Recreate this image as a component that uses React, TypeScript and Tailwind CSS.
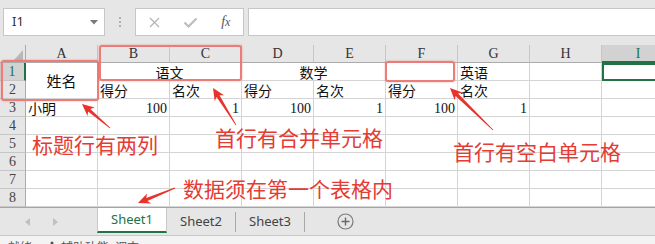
import React from "react";

const CJK = "[font-family:'Noto_Sans_CJK_SC',sans-serif]";
const SERIF = "[font-family:'Liberation_Serif',serif]";
const SANS = "[font-family:'Noto_Sans','Noto_Sans_CJK_SC',sans-serif]";

const COLS = ["A", "B", "C", "D", "E", "F", "G", "H"];

function arrowPoints(x1: number, y1: number, x2: number, y2: number) {
  const dx = x2 - x1;
  const dy = y2 - y1;
  const L = Math.hypot(dx, dy);
  const ux = dx / L;
  const uy = dy / L;
  const nx = -uy;
  const ny = ux;
  const hl = 12;
  const hw = 5.5;
  const sw = 1.7;
  const tw = 0.4;
  const bx = x2 - ux * hl;
  const by = y2 - uy * hl;
  const pts = [
    [x1 + nx * tw, y1 + ny * tw],
    [bx + ux * 2.5 + nx * sw, by + uy * 2.5 + ny * sw],
    [bx + nx * hw, by + ny * hw],
    [x2, y2],
    [bx - nx * hw, by - ny * hw],
    [bx + ux * 2.5 - nx * sw, by + uy * 2.5 - ny * sw],
    [x1 - nx * tw, y1 - ny * tw],
  ];
  return pts.map((p) => p.map((v) => v.toFixed(1)).join(",")).join(" ");
}

const cell = "bg-white border-r border-b border-[#d4d4d4] flex items-end px-[2px] overflow-visible whitespace-nowrap";
const cjkText = `${CJK} text-[14px] leading-[16px] text-[#111]`;
const numText = `${SERIF} text-[14px] leading-[15px] text-[#111]`;

function RowHead({ n, active }: { n: number; active?: boolean }) {
  return (
    <div
      className={
        active
          ? `bg-[#d2d2d2] border-r-2 border-r-[#217346] border-b border-b-[#c6c6c6] flex items-end justify-center ${SERIF} text-[14px] leading-[16px] text-[#217346]`
          : `bg-[#e6e6e6] border-r border-r-[#ababab] border-b border-b-[#c6c6c6] flex items-end justify-center ${SERIF} text-[14px] leading-[16px] text-[#444]`
      }
    >
      {n}
    </div>
  );
}

function Empty() {
  return <div className={cell} />;
}

export default function App() {
  const arrows: [number, number, number, number][] = [
    [110, 128, 82, 104],
    [236, 125, 213, 88],
    [493, 130, 450, 88],
    [175, 188, 138, 203],
  ];

  return (
    <div className="relative w-[655px] h-[244px] overflow-hidden bg-[#e6e6e6]">
      {/* formula bar */}
      <div className="flex items-start h-[45px] pt-[8px]">
        <div className="ml-[3px] w-[102px] h-[28px] border border-[#c6c6c6] bg-white flex items-center justify-between pl-[8px] pr-[6px]">
          <span className={`${SANS} text-[13px] text-[#333]`}>I1</span>
          <svg width="8" height="5" viewBox="0 0 8 5">
            <polygon points="0,0 8,0 4,4.5" fill="#7a7a7a" />
          </svg>
        </div>
        <div className="w-[30px] h-[28px] flex flex-col items-center justify-center gap-[2px]">
          <div className="w-[2px] h-[2px] bg-[#b0b0b0]" />
          <div className="w-[2px] h-[2px] bg-[#b0b0b0]" />
          <div className="w-[2px] h-[2px] bg-[#b0b0b0]" />
        </div>
        <div className="w-[109px] h-[28px] border border-[#c6c6c6] bg-white flex items-center">
          <div className="w-[37px] flex justify-center">
            <svg width="11" height="11" viewBox="0 0 11 11">
              <path d="M1 1 L10 10 M10 1 L1 10" stroke="#b4b4b4" strokeWidth="1.3" />
            </svg>
          </div>
          <div className="w-[37px] flex justify-center">
            <svg width="15" height="11" viewBox="0 0 15 11">
              <path d="M1.5 5.5 L5.5 9.5 L13.5 1.5" stroke="#bdbdbd" strokeWidth="2.2" fill="none" />
            </svg>
          </div>
          <div className="w-[35px] flex justify-center">
            <span className="[font-family:'Liberation_Serif',serif] italic text-[14px] text-[#555] leading-none">
              f<span className="text-[12px]">x</span>
            </span>
          </div>
        </div>
        <div className="ml-[4px] flex-1 -mr-[2px] h-[28px] border border-[#c6c6c6] bg-white" />
      </div>

      {/* grid */}
      <div className="grid grid-cols-[26px_repeat(9,72px)] auto-rows-[18px]">
        <div className="bg-[#e6e6e6] border-r border-r-[#ababab] border-b border-b-[#ababab] relative">
          <svg className="absolute left-[13px] top-[5px]" width="10" height="11" viewBox="0 0 10 11">
            <polygon points="10,0 10,11 0,11" fill="#b8b8b8" />
          </svg>
        </div>
        {COLS.map((c) => (
          <div
            key={c}
            className={`bg-[#e6e6e6] border-r border-r-[#c6c6c6] border-b border-b-[#ababab] flex items-end justify-center ${SERIF} text-[14px] leading-[16px] text-[#333]`}
          >
            {c}
          </div>
        ))}
        <div className={`bg-[#d2d2d2] border-b-2 border-b-[#217346] flex items-end justify-center ${SERIF} text-[14px] leading-[15px] text-[#217346]`}>
          I
        </div>

        {/* row 1 */}
        <RowHead n={1} active />
        <div className={`${cell} row-span-2 !items-center justify-center`}>
          <span className={`${CJK} text-[15px] leading-[18px] text-[#111]`}>姓名</span>
        </div>
        <div className={`${cell} col-span-2 justify-center`}>
          <span className={cjkText}>语文</span>
        </div>
        <div className={`${cell} col-span-2 justify-center`}>
          <span className={cjkText}>数学</span>
        </div>
        <Empty />
        <div className={cell}>
          <span className={cjkText}>英语</span>
        </div>
        <Empty />
        <div className="bg-white border-2 border-[#217346]" />

        {/* row 2 */}
        <RowHead n={2} />
        <div className={cell}><span className={cjkText}>得分</span></div>
        <div className={cell}><span className={cjkText}>名次</span></div>
        <div className={cell}><span className={cjkText}>得分</span></div>
        <div className={cell}><span className={cjkText}>名次</span></div>
        <div className={cell}><span className={cjkText}>得分</span></div>
        <div className={cell}><span className={cjkText}>名次</span></div>
        <Empty />
        <Empty />

        {/* row 3 */}
        <RowHead n={3} />
        <div className={cell}><span className={cjkText}>小明</span></div>
        <div className={`${cell} justify-end`}><span className={numText}>100</span></div>
        <div className={`${cell} justify-end`}><span className={numText}>1</span></div>
        <div className={`${cell} justify-end`}><span className={numText}>100</span></div>
        <div className={`${cell} justify-end`}><span className={numText}>1</span></div>
        <div className={`${cell} justify-end`}><span className={numText}>100</span></div>
        <div className={`${cell} justify-end`}><span className={numText}>1</span></div>
        <Empty />
        <Empty />

        {[4, 5, 6, 7, 8].map((r) => (
          <React.Fragment key={r}>
            <RowHead n={r} />
            {Array.from({ length: 9 }).map((_, i) => (
              <Empty key={i} />
            ))}
          </React.Fragment>
        ))}
      </div>

      {/* sheet tabs */}
      <div className="flex items-stretch h-[28px] border-t border-[#a6a6a6] bg-[#e6e6e6]">
        <div className="w-[97px] flex items-center">
          <svg className="ml-[25px]" width="5" height="8" viewBox="0 0 5 8">
            <polygon points="5,0 5,8 0,4" fill="#c0c0c0" />
          </svg>
          <svg className="ml-[23px]" width="5" height="8" viewBox="0 0 5 8">
            <polygon points="0,0 0,8 5,4" fill="#c0c0c0" />
          </svg>
        </div>
        <div className={`w-[70px] mb-[2px] bg-white border-x border-x-[#c8c8c8] border-b-2 border-b-[#217346] flex items-center justify-center ${SANS} text-[13px] text-[#217346]`}>
          Sheet1
        </div>
        <div className={`w-[69px] h-[20px] self-center border-r border-[#a8a8a8] flex items-center justify-center ${SANS} text-[13px] text-[#444]`}>
          Sheet2
        </div>
        <div className={`w-[69px] h-[20px] self-center border-r border-[#a8a8a8] flex items-center justify-center ${SANS} text-[13px] text-[#444]`}>
          Sheet3
        </div>
        <div className="ml-[32px] flex items-center">
          <svg width="17" height="17" viewBox="0 0 17 17">
            <circle cx="8.5" cy="8.5" r="7.5" fill="none" stroke="#7a7a7a" strokeWidth="1.2" />
            <path d="M8.5 4.5 V12.5 M4.5 8.5 H12.5" stroke="#6a6a6a" strokeWidth="1.4" />
          </svg>
        </div>
      </div>

      {/* status bar */}
      <div className={`h-[30px] border-t border-[#c8c8c8] bg-[#f3f3f3] flex items-start pt-[3px] pl-[8px] gap-[14px] ${CJK} text-[12px] leading-[16px] text-[#555]`}>
        <span>就绪</span>
        <span className="flex items-center gap-[3px]">
          <svg width="12" height="12" viewBox="0 0 12 12">
            <circle cx="6" cy="2" r="1.5" fill="#555" />
            <path d="M1 4.5 H11 M6 4.5 V8 M6 8 L3.5 11.5 M6 8 L8.5 11.5" stroke="#555" strokeWidth="1.2" fill="none" />
          </svg>
          <span>辅助功能: 调查</span>
        </span>
      </div>

      {/* annotations */}
      <div className="absolute left-[1px] top-[60px] w-[98px] h-[41px] border-2 border-[#ec7c77] rounded-[3px] shadow-[0_0_2px_rgba(230,80,80,0.5)] pointer-events-none" />
      <div className="absolute left-[99px] top-[45px] w-[143px] h-[36px] border-2 border-[#ec7c77] rounded-[3px] shadow-[0_0_2px_rgba(230,80,80,0.5)] pointer-events-none" />
      <div className="absolute left-[385px] top-[61px] w-[70px] h-[21px] border-2 border-[#ec7c77] rounded-[3px] shadow-[0_0_2px_rgba(230,80,80,0.5)] pointer-events-none" />

      <svg className="absolute left-0 top-0 pointer-events-none" width="655" height="244" viewBox="0 0 655 244">
        {arrows.map((a, i) => (
          <polygon key={i} points={arrowPoints(a[0], a[1], a[2], a[3])} fill="#e8322b" />
        ))}
      </svg>

      <div className={`absolute left-[32px] top-[134px] ${CJK} text-[21px] leading-none text-[#e53b34] whitespace-nowrap`}>标题行有两列</div>
      <div className={`absolute left-[215px] top-[127px] ${CJK} text-[21px] leading-none text-[#e53b34] whitespace-nowrap`}>首行有合并单元格</div>
      <div className={`absolute left-[453px] top-[141px] ${CJK} text-[21px] leading-none text-[#e53b34] whitespace-nowrap`}>首行有空白单元格</div>
      <div className={`absolute left-[183px] top-[178px] ${CJK} text-[21px] leading-none text-[#e53b34] whitespace-nowrap`}>数据须在第一个表格内</div>
    </div>
  );
}
